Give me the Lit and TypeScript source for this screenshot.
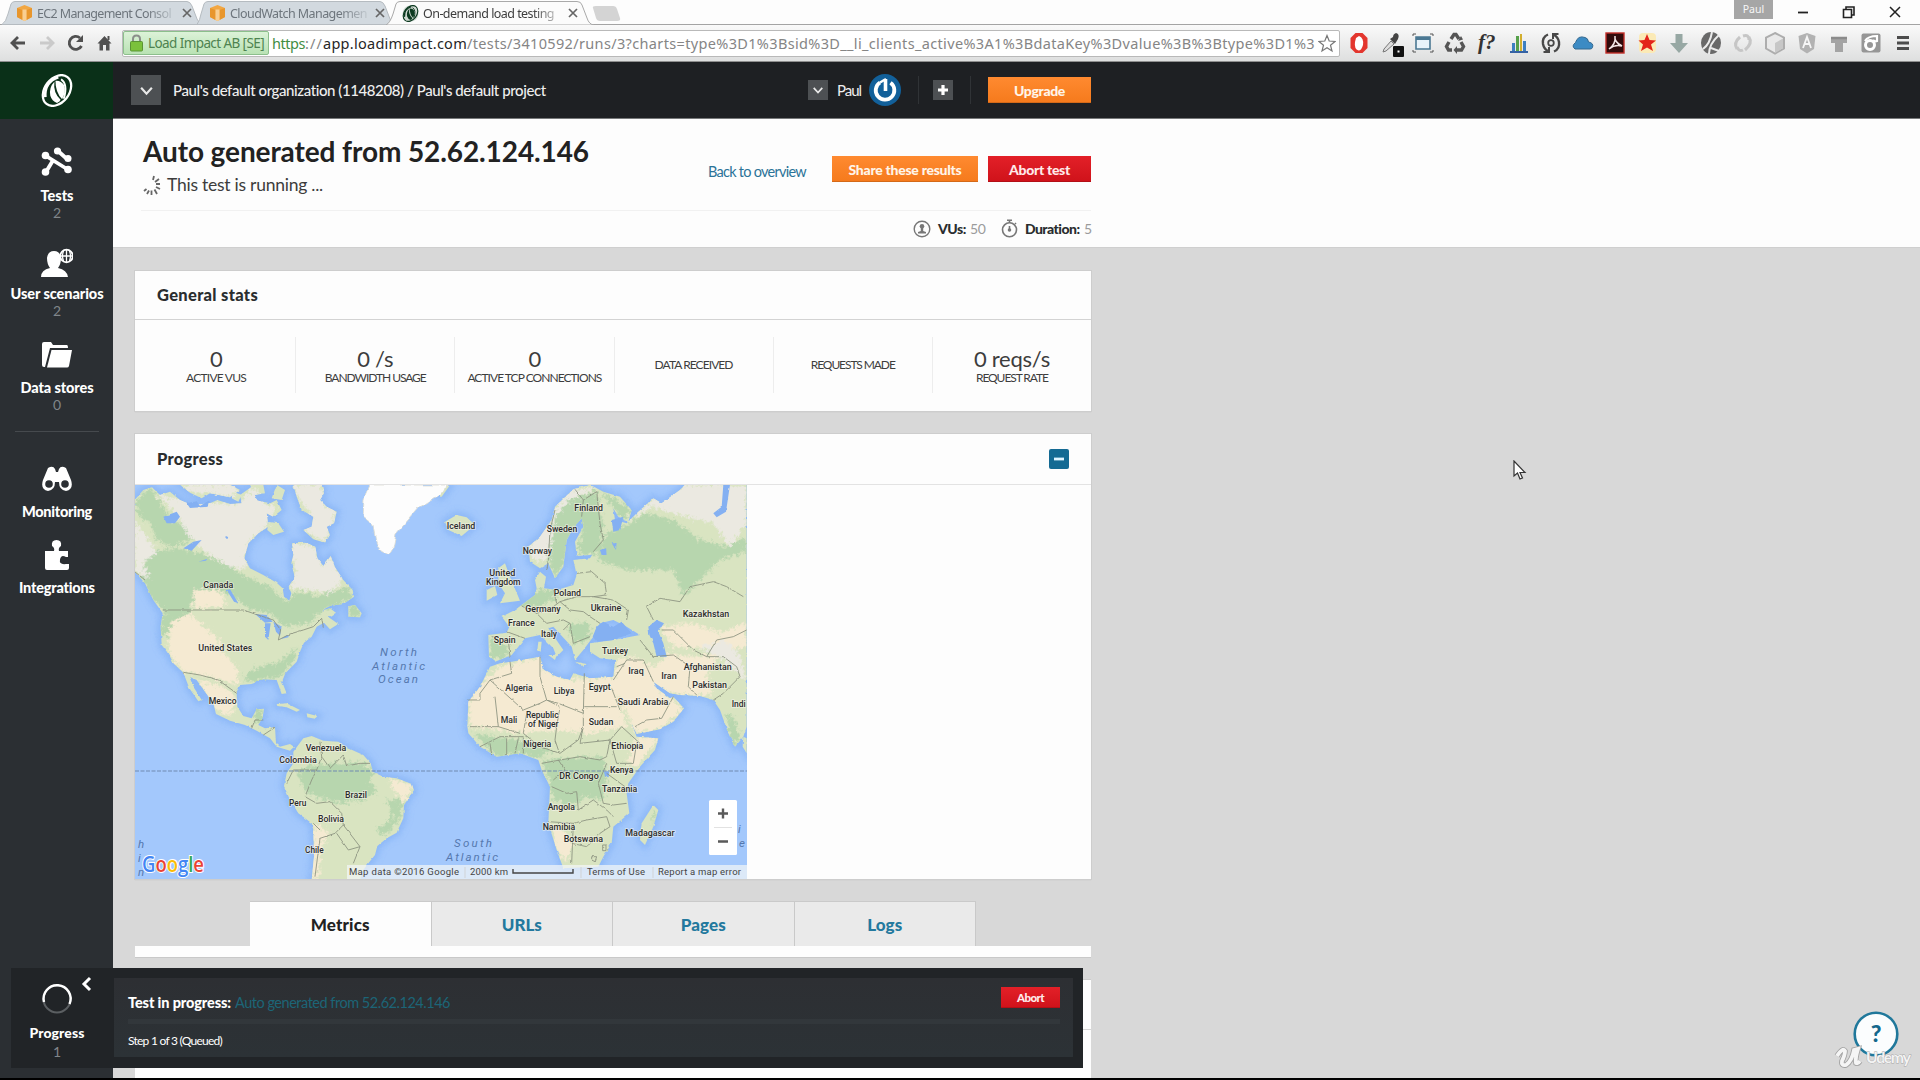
import { LitElement, html, svg, css, type TemplateResult } from "lit";
import { customElement, property } from "lit/decorators.js";

/** Single line of text whose tracking is adjusted so that it fills a given width. */
@customElement("fit-text")
class FitText extends LitElement {
  @property() text = "";
  @property({ type: Number }) w = 0;
  static styles = css`
    :host { display: inline-block; white-space: pre; text-align: left; }
  `;
  render() {
    return html`<span>${this.text}</span>`;
  }
  updated() {
    const span = this.renderRoot.querySelector("span")!;
    span.style.letterSpacing = "0px";
    const gap = (this.w - span.getBoundingClientRect().width) / this.text.length;
    span.style.letterSpacing = `${gap.toFixed(3)}px`;
    this.style.width = `${this.w}px`;
  }
}

const fit = (text: string, w: number, cls = "") =>
  html`<fit-text class=${cls} .text=${text} .w=${w}></fit-text>`;

/* ---------------------------------------------------------------- browser */

const cube = svg`<path d="M1 4 8.500 1 16 4V13L8.500 17 1 13Z" fill="#f2a743"/><path d="M1 4 6.500 6V16L1 13ZM16 4 10.500 6V16L16 13Z" fill="#e8962c"/><path d="M6.500 5.500H10.500V16.300L8.500 17 6.500 16.300Z" fill="#f9cf92"/>`;
const swirl = svg`
  <g transform="rotate(38 16 16)" fill="none" stroke="currentColor">
    <ellipse cx="16" cy="16" rx="11.800" ry="16.500" stroke-width="2.200"/>
    <path d="M9 5Q1 17 11 28" stroke-width="2.600"/>
  </g>
  <path d="M13.500 7.500Q8 13 9.500 21Q11 26 16 28Q19 27 19.500 25Q12 18 13.500 7.500Z" fill="currentColor"/>
  <path d="M14.500 6.500Q20 6 23 11Q25 17 21 24.500Q14.500 18 14.500 6.500Z" fill="currentColor"/>
  <path d="M20 5Q27 10 22.500 24" fill="none" stroke="currentColor" stroke-width="1.800"/>`;

@customElement("browser-bar")
class BrowserBar extends LitElement {
  static styles = css`
    :host { display: block; font-family: "Noto Sans", "Open Sans", sans-serif; color: #444; }
    .strip { height: 24px; background: #fdfdfd; border-bottom: 1px solid #a4a4a4; display: flex; position: relative; }
    .shapes { position: absolute; left: 0; top: 0; }
    .tabs { display: flex; position: relative; padding-left: 16px; width: 620px; box-sizing: border-box; }
    .tab { width: 193px; display: flex; align-items: center; height: 26px; font-size: 12.500px; color: #6d757c; flex: none; }
    .tab.on { color: #3d3d3d; width: 190px; }
    .tab svg { flex: none; margin-right: 4px; color: #0c3a20; }
    .label { width: 141px; -webkit-mask-image: linear-gradient(90deg, #000 78%, #0002 98%); }
    .x { margin: 0 0 0 4px !important; color: #666 !important; }
    .win { margin-left: auto; display: flex; align-items: flex-start; margin-right: 17px; }
    .user { width: 39px; height: 19px; background: #a6a6a6; color: #f6f6f6; font-size: 10.500px; text-align: center; line-height: 19px; margin-right: 22px; }
    .bar { height: 36px; display: flex; align-items: center; background: linear-gradient(#fafafa, #dedfdf); border-bottom: 1px solid #8f8f8f; }
    .nav { width: 122px; flex: none; }
    .omni { width: 1218px; height: 27px; border: 1px solid #b9b9b9; background: #fff; display: flex; align-items: center; border-radius: 2px; box-sizing: border-box; flex: none; }
    .ev { width: 146px; height: 24px; box-sizing: border-box; border: 1px solid #8cbf8c; background: linear-gradient(#dcf2d8, #b9e2b4); color: #4e8350; font-size: 13.500px; display: flex; align-items: center; border-radius: 2px; margin-right: 3px; flex: none; }
    .ev svg { margin: 0 4px 0 5px; }
    .url { font-size: 14.500px; line-height: 20px; color: #858585; display: flex; width: 1046px; flex: none; overflow: hidden; }
    .url .s { color: #3f8e43; }
    .url .h { color: #262626; }
    .ext { display: flex; margin-left: 3px; }
    .ext svg { width: 32px; height: 28px; flex: none; }
  `;
  render() {
    const X = html`<svg class="x" width="10" height="10" viewBox="0 0 10 10"><path d="M1 1 9 9M9 1 1 9" stroke="currentColor" stroke-width="1.700"/></svg>`;
    const ext: TemplateResult[] = [
      svg`<path d="M12.500 4H19.500L24.500 9V19L19.500 24H12.500L7.500 19V9Z" fill="#e3362e"/><path d="M16 7Q21 9 20 16Q18.500 21.500 15.500 21.500Q11 20 12 13L13 9Z" fill="#fff"/>`,
      svg`<path d="M8 23 9 20 16 12 19 15 11 22Z" fill="#ddd" stroke="#777"/><path d="M15 10 20 15 23 10Q25 5 21 4Q18 5 18 8Z" fill="#444"/><rect x="18" y="17" width="11" height="11" rx="1" fill="#111"/><rect x="22.500" y="21.500" width="2" height="2" fill="#fff"/>`,
      svg`<path d="M9 8H23V20H9Z" fill="#e9f3fa" stroke="#4b7893" stroke-width="1.600"/><path d="M9 9.500H23" stroke="#4b7893" stroke-width="3"/><path d="M6 7V5H9M23 5H26V7M6 21V23H9M26 21V23H23" fill="none" stroke="#555"/>`,
      svg`<g fill="none" stroke="#555" stroke-width="3.400"><path d="M12 10 15 5.500H17L20 10"/><path d="M10 13 7.500 17.500 9.500 21H13"/><path d="M22 13 24.500 17.500 22.500 21H17"/></g><path d="M19 12 24 10.500 22 7ZM18 17V25L14.500 21Z" fill="#555"/>`,
      svg`<text x="7" y="20" font-family="Liberation Serif, serif" font-style="italic" font-weight="700" font-size="21" fill="#333">f?</text>`,
      svg`<path d="M9 23V14H12V23M20 23V12H23V23" fill="#3c7fc0"/><path d="M13 23V7H16V23" fill="#55a04a"/><path d="M17 23V5H19V23" fill="#d2ae2e"/><path d="M7 23H25" stroke="#3562a4" stroke-width="2"/>`,
      svg`<g fill="none" stroke="#484848" stroke-width="2.400"><path d="M13 5.500Q7 8 8 15Q9 20 13 22"/><path d="M19 22.500Q25 20 24 13Q23 8 19 6"/><circle cx="16" cy="14" r="2.800" stroke-width="1.800"/></g><path d="M8.500 23H14V18M23.500 5H18V10" fill="none" stroke="#484848" stroke-width="2"/>`,
      svg`<path d="M8 20Q4 17 8.500 13.500Q11 6 18 8.500Q21 9 21.500 13Q27 14 25.500 18.500Q25 20 23 20Z" fill="#3c8bc4" stroke="#34698f"/>`,
      svg`<rect x="7" y="4" width="18" height="20" fill="#300b0b" stroke="#c22e28" stroke-width="1.400"/><path d="M10 20Q17 15 16 7Q15 13 23 17Q16 15 10 20Z" fill="none" stroke="#f4e6e6" stroke-width="1.500"/>`,
      svg`<rect x="8" y="4" width="17" height="20" rx="4" fill="#fbeab6"/><path d="M16 5 18.500 11 25 11.500 20 15.500 22 22 16 18.500 10 22 12 15.500 7.500 11.500 13.500 11Z" fill="#e3241b"/>`,
      svg`<path d="M12.500 5H19.500V14H25L16 24 7 14H12.500Z" fill="#97a8a4"/>`,
      svg`<ellipse cx="16" cy="14" rx="10" ry="11" fill="#696969"/><path d="M8 20Q15 15 17 3M14 25Q14 15 24 6M16 19 24 22" fill="none" stroke="#ececec" stroke-width="2"/>`,
      svg`<path d="M10 20Q6 14 13 8M22 8Q26 14 18 21M16 7Q22 5 22 11M16 21Q12 23 10 18" fill="none" stroke="#c6c6c6" stroke-width="3"/>`,
      svg`<path d="M16 4 25 8.500V19.500L16 24.500 7 19.500V8.500Z" fill="#e9e9e9" stroke="#adadad" stroke-width="2"/><path d="M16 14V24L24 19V9.500Z" fill="#c7c7c7"/>`,
      svg`<path d="M16 4 24.500 7 23 20 16 24.500 9 20 7.500 7Z" fill="#b2b2b2"/><path d="M12 19 16 8 20 19M13.500 15H18.500" fill="none" stroke="#f6f6f6" stroke-width="1.800"/>`,
      svg`<path d="M8 9H24V14H20V23H12V14H8Z" fill="#a4a4a4"/><path d="M8 9H24" stroke="#8b8b8b" stroke-width="2.500"/>`,
      svg`<rect x="6.500" y="4.500" width="19" height="19" rx="2" fill="#969696"/><circle cx="15" cy="16" r="4.500" fill="none" stroke="#fff" stroke-width="3"/><path d="M10 12Q13 7 22 7V12Q20 13 18 11" fill="none" stroke="#fff" stroke-width="2.200"/>`,
      svg`<path d="M10 8.500H22M10 14H22M10 19.500H22" stroke="#4c4c4c" stroke-width="3.200"/>`,
    ];
    return html`
      <div class="strip">
        <svg class="shapes" width="640" height="25" viewBox="0 0 640 25">
          <path d="M2 24.500Q6 22 8 14L11 4Q12 1.500 15 1.500H187Q190 1.500 192 6L197 19Q199 24.500 203 24.500Z" fill="#d2d9df" stroke="#b5bbc0"/>
          <path d="M197 24.500Q200 20 201 14L204 4Q205 1.500 208 1.500H380Q383 1.500 385 6L390 19Q392 24.500 396 24.500Z" fill="#d2d9df" stroke="#b5bbc0"/>
          <path d="M386 25Q390 23 393 14L396 4Q397 1.500 400 1.500H577Q581 1.500 582 5L587 18Q589 24.500 594 25Z" fill="#fbfbfb" stroke="#a9a9a9"/>
          <path d="M593 8Q592 6 596 6H613Q616 6 617 9L620 18Q621 21 617 21H600Q597 21 596 18Z" fill="#d4d4d4"/>
        </svg>
        <div class="tabs">
          <div class="tab"><svg width="17" height="18" viewBox="0 0 17 18">${cube}</svg><div class="label">${fit("EC2 Management Consol", 134)}</div>${X}</div>
          <div class="tab"><svg width="17" height="18" viewBox="0 0 17 18">${cube}</svg><div class="label">${fit("CloudWatch Managemen", 137)}</div>${X}</div>
          <div class="tab on"><svg width="17" height="17" viewBox="0 0 32 32"><circle cx="16" cy="16" r="15" fill="#cfd8d1"/>${swirl}</svg><div class="label">${fit("On-demand load testing", 131)}</div>${X}</div>
        </div>
        <div class="win">
          <div class="user">Paul</div>
          <svg width="108" height="24" viewBox="0 0 108 24" fill="none" stroke="#222">
            <path d="M3 12.500H13" stroke-width="1.800"/><path d="M48.500 9.500H56.500V17.500H48.500Z" stroke-width="1.600"/><path d="M51 9V7H59V15H57" stroke-width="1.600"/><path d="M95 7 105 17M105 7 95 17" stroke-width="1.500"/>
          </svg>
        </div>
      </div>
      <div class="bar">
        <svg class="nav" width="122" height="30" viewBox="0 0 122 30" fill="none" stroke="#505050" stroke-width="2.800">
          <path d="M12 15H25M18 9 12 15 18 21"/><path d="M40 15H52M47 9 53 15 47 21" stroke="#cacaca"/>
          <path d="M80 10A6.500 6.500 0 1 0 81.500 18"/><path d="M83 7V14H76Z" fill="#505050" stroke="none"/>
          <path d="M97.500 15.500 104.500 8 111.500 15.500H109.500V22.500H106V17H103V22.500H99.500V15.500Z" fill="#505050" stroke="none"/><path d="M108.500 8V12" stroke-width="2"/>
        </svg>
        <div class="omni">
          <div class="ev"><svg width="15" height="18" viewBox="0 0 15 18"><path d="M4 8V5Q4 1.500 7.500 1.500T11 5V8" fill="none" stroke="#8b8f8b" stroke-width="2"/><rect x="1.500" y="7.500" width="12" height="9.500" rx="1" fill="#7bc13c" stroke="#5a9434"/></svg>${fit("Load Impact AB [SE]", 116)}</div>
          <div class="url">${fit("https", 33, "s")}${fit("://", 18)}${fit("app.loadimpact.com", 144, "h")}${fit("/tests/3410592/runs/3?charts=type%3D1%3Bsid%3D__li_clients_active%3A1%3BdataKey%3Dvalue%3B%3Btype%3D1%3", 848)}</div>
          <svg width="18" height="19" viewBox="0 0 18 19"><path d="M9 1.500 11.200 7 17 7.500 12.500 11.200 14 17 9 13.800 4 17 5.500 11.200 1 7.500 6.800 7Z" fill="#fff" stroke="#777" stroke-width="1.200"/></svg>
        </div>
        <div class="ext">${ext.map((e) => html`<svg viewBox="0 0 32 28">${e}</svg>`)}</div>
      </div>`;
  }
}

/* -------------------------------------------------------------------- map */

type Label = [string, number, number, number];

/* Shapes are drawn on two sheets at three units per pixel: west and east of the mid Atlantic. */
const westLand = [
  "M14 60 40 30 66 22 90 45 120 35 150 60 185 75 240 70 262 60 300 72 335 70 330 45 365 20 380 60 410 75 440 60 455 90 430 110 410 100 415 140 385 160 355 190 343 235 360 265 400 285 440 308 458 325 462 350 478 362 484 340 476 320 494 290 484 250 490 225 486 190 525 188 556 200 562 235 580 258 602 228 615 262 640 300 668 330 672 350 640 372 600 378 572 392 600 385 618 398 596 412 625 432 600 448 582 428 560 440 545 470 522 488 512 510 500 545 466 580 456 605 470 640 455 642 440 600 400 598 365 612 330 615 320 640 322 680 340 708 365 715 380 688 402 686 398 712 385 735 405 745 435 742 438 790 450 800 480 792 492 800 480 812 440 800 420 775 380 752 345 735 300 722 258 702 250 670 225 635 200 600 178 590 190 620 215 660 205 664 178 625 160 578 130 550 118 525 95 495 92 440 98 400 70 360 45 310 14 275Z",
  "M490 815 520 775 545 768 580 782 625 785 655 805 700 825 722 850 728 875 760 890 800 895 845 912 852 930 822 975 820 1015 800 1058 770 1075 742 1098 735 1125 715 1150 700 1170 690 1200 545 1200 552 1130 550 1050 545 1030 505 1000 480 960 462 918 470 880 490 850Z",
  "M150 14 300 14 330 30 300 52 240 40 215 55 180 38Z", "M310 35 335 45 325 65 305 55Z",
  "M360 14 400 14 405 40 375 45ZM440 14 465 30 455 60 425 55ZM385 62 420 70 412 100 398 88Z",
  "M490 14 575 14 582 40 570 60 590 80 620 95 612 130 590 140 600 165 585 188 550 178 520 150 545 140 550 110 515 90 500 50Z",
  "M415 125 445 130 462 155 430 165 412 150Z", "M655 378 675 375 695 400 690 412 655 410Z",
  "M440 672 470 670 510 690 500 695 470 682 442 678ZM530 700 562 708 555 716 532 712Z",
];
const westGreen = [
  "M14 70 60 22 95 70 120 120 190 145 215 170 160 190 120 200 80 180 60 130 30 110Z",
  "M60 215 150 205 230 225 300 262 350 290 420 320 470 365 500 335 540 340 560 350 650 320 672 350 620 378 570 395 540 430 470 440 420 400 350 385 300 340 240 325 190 340 180 395 160 430 110 400 60 350 30 290Z",
  "M95 400 160 400 190 430 165 450 130 420 110 470 92 470Z", "M360 570 450 545 500 500 490 545 450 590 380 605 340 600Z",
  "M500 880 530 860 600 850 700 850 730 870 720 900 740 940 700 960 620 970 530 940Z M770 960 820 960 810 1020 760 1070 740 1050 790 1010Z",
  "M380 690 400 690 398 712 385 735 370 720ZM655 378 675 375 695 400 690 412 655 410Z",
];
const westSand = [
  "M120 430 180 400 210 430 260 470 280 520 320 560 325 615 270 600 200 580 160 575 115 520Z",
  "M780 895 848 915 825 970 790 930ZM552 1030 600 1060 570 1110 565 1200 545 1200Z", "M190 330 270 330 290 380 190 385Z",
  "M200 600 280 620 320 660 300 710 260 690Z",
];
const westTundra = [
  "M80 40 150 60 240 72 330 70 370 20 410 75 440 80 410 140 355 190 343 235 350 268 300 262 230 220 170 160 150 120Z",
  "M486 190 556 200 580 258 602 228 640 300 600 340 540 330 480 320 494 290Z", "M14 120 50 170 80 220 40 250 60 300 14 270Z",
  "M150 14 300 14 330 30 300 52 240 40 180 38ZM490 14 575 14 590 80 620 95 585 188 520 150 550 110 500 50Z",
];
const westLakes = [
  "M100 110 140 95 150 110 135 130 110 130ZM160 205 190 185 215 180 185 212ZM375 402 410 405 428 425 405 428ZM405 430 422 430 415 480 405 470ZM430 425 455 440 450 468 438 455ZM450 478 478 462 475 472ZM285 170 292 168 290 178ZM170 70 200 64 210 78 240 60 236 80 180 84ZM290 330 300 328 325 370 312 365ZM205 245 232 236 228 242Z",
];
const westBorders = [
  "M98 390H340L375 402 430 420 452 450 445 480 480 462 520 450 550 440 575 415 580 440", "M160 577 210 585 265 600 320 640",
  "M365 745 375 720 400 720M400 765 435 742M570 785 575 830 560 870 525 870 490 870 470 910M575 830 600 865 640 825 650 858 690 850 720 850M560 870 545 900 525 950 560 970 600 965 635 1000 640 1035 615 1060 570 1075 555 1190M640 1035 690 1100 655 1110 620 1060M690 1100 670 1150M550 1030 570 1050M14 275 45 300",
];
const eastLand = [
  "M145 465 200 458 208 440 185 410 225 390 245 375 285 345 290 325 285 300 300 275 318 290 312 325 350 330 400 315 410 285 400 240 450 235 460 220 490 215 450 225 410 228 405 185 430 140 425 115 402 140 380 180 370 260 345 295 325 250 300 265 270 245 265 200 300 170 335 120 345 80 400 28 450 14 490 35 540 50 575 90 565 125 535 110 520 85 525 120 560 130 595 95 640 55 665 70 720 30 735 14 920 14 920 740 910 770 885 800 865 760 840 690 820 660 780 648 720 645 690 640 640 605 650 625 690 655 700 650 732 685 700 725 660 748 590 762 560 700 520 625 530 610 555 680 590 770 655 775 645 810 600 860 565 910 560 940 568 1000 520 1040 515 1090 490 1130 475 1160 370 1165 350 1110 325 1030 330 920 305 870 295 840 240 820 170 830 120 800 85 760 82 740 85 665 120 620 150 560 180 550 215 545 300 530 312 570 350 590 390 600 400 580 450 595 520 590 525 540 480 535 450 515 450 490 520 480 600 465 560 440 520 420 480 430 460 470 445 490 430 510 405 540 395 500 340 440 325 445 370 510 350 530 340 505 300 465 255 475 235 500 215 525 165 545 147 530Z",
  "M175 265 195 250 210 290 235 350 240 362 180 370 195 340 175 310ZM140 330 165 318 172 345 140 362Z",
  "M15 125 50 105 80 112 105 135 65 168 25 150Z", "M640 975 655 990 640 1040 615 1095 600 1080 605 1030Z",
  "M295 485 305 485 302 515 292 510ZM325 525 350 525 345 540ZM910 770 920 775 920 820 908 800ZM405 545 440 552 430 560Z", "M0 14 28 18 5 50 0 50Z",
];
const eastGreen = [
  "M345 110 390 60 470 30 490 130 480 220 410 228 430 140 402 140 370 260 345 295 325 240Z",
  "M480 30 570 85 560 120 530 100 520 80 500 60Z", "M500 160 570 130 620 100 700 120 780 180 860 200 920 170 920 215 840 240 790 290 730 350 700 270 560 270 470 240Z",
  "M305 840 370 835 490 830 500 880 490 960 430 950 400 980 340 960 325 900Z", "M100 760 240 780 340 810 300 835 240 820 170 830Z",
  "M860 700 885 720 900 770 885 800 865 760ZM270 330 340 330 360 350 280 385 240 380ZM380 430 450 430 450 480 400 490ZM150 470 210 500 190 540 150 530ZM640 990 650 1000 635 1040Z",
];
const eastSand = [
  "M85 665 120 620 180 560 300 530 312 570 390 600 520 590 530 650 560 740 450 760 340 750 240 760 90 740Z",
  "M530 540 580 530 640 560 690 520 760 530 840 520 800 590 820 640 780 648 690 640 650 625 732 685 660 748 590 762 560 700 520 625Z",
  "M330 1035 360 1040 400 1090 380 1150 350 1110ZM590 770 655 775 590 860 560 850Z", "M660 440 760 430 840 460 920 430 920 500 840 510 700 500Z",
];
const eastTundra = ["M560 125 640 55 735 14 920 14 920 130 870 200 820 130 700 100 640 80Z", "M265 200 335 120 345 80 400 28 480 20 390 60 345 110 325 240 275 240Z", "M780 500 860 480 900 530 920 600 850 540Z"];
const eastWater = [
  "M470 440 490 425 520 440 545 425 575 460 520 480 470 485 458 470Z", "M625 440 650 420 672 430 655 455 670 490 680 530 650 530 640 490 628 465Z",
  "M820 100 845 80 850 14 870 14 858 95 830 112ZM480 210 498 205 500 225 485 225ZM515 190 530 190 528 210ZM492 875 508 872 506 892 495 890ZM515 120 550 110 540 150 520 155Z",
];
const eastBorders = [
  "M405 28 430 60 470 35 480 130 490 180 460 215M345 90 330 150 325 240M430 60 425 110M325 245 320 270",
  "M620 380 660 355 720 365 750 320 820 305 860 320 910 350M620 380 640 420M665 450 700 450 760 510 800 530 830 480 880 470 920 450",
  "M245 378 290 400 340 380 360 365 410 350 460 350 500 345 495 310 455 275 410 280M460 350 520 360 565 390 560 420M290 400 320 430 370 420 390 430 370 450M360 365 390 390 430 395 450 410 480 430M340 330 350 370M390 430 400 490 450 470M210 530 205 480 155 470M200 455 255 475M520 600 560 540 610 540 640 605M530 560 555 550M600 480 640 530 700 525 750 560 745 620 770 645M800 530 850 530 890 560 900 590 850 640 820 660M585 740 620 720 665 715 700 650",
  "M85 660H120V640L150 600 215 580 210 545M150 600 250 690 300 670 320 660 300 590 300 530M165 650 175 740 90 740M320 660 355 670 430 700 433 580M320 660 360 680 350 740 345 780 355 810M430 700V740L415 780 360 820 300 800 250 760 260 700M515 625 540 690M433 680H530M430 740 420 790 510 780 500 830 480 840 420 830 360 840 305 850M510 780 545 740 600 790M510 780 530 850 580 850 590 790M175 740 240 760M120 800 180 770 250 770M155 825 150 790M200 825V775M225 820 235 775M250 770 250 820",
  "M335 920 380 940 410 935 415 990 460 960M325 1025 400 1030 440 1020 500 1010 510 1040M400 1030 395 1150M395 1090 440 1100 480 1060 510 1040M490 970 475 910 500 850M490 970 520 975 560 970M460 960 500 990 520 1010M500 880 555 920M355 840 375 870 340 900M455 1130 470 1130 465 1145 455 1140ZM488 1095H498V1112H488Z",
];
const westNames: Label[] = [
  ["Canada", 220, 324, 90], ["United States", 205, 514, 162], ["Mexico", 236, 671, 84], ["Venezuela", 527, 812, 122], ["Colombia", 448, 849, 112],
  ["Brazil", 645, 953, 66], ["Peru", 477, 977, 52], ["Bolivia", 564, 1026, 78], ["Chile", 525, 1118, 56],
];
const eastNames: Label[] = [
  ["Iceland", 20, 147, 86], ["Finland", 403, 93, 86], ["Sweden", 320, 156, 92], ["Norway", 248, 222, 88], ["United", 148, 288, 78], ["Kingdom", 138, 315, 104],
  ["Poland", 341, 347, 82], ["Germany", 256, 396, 106], ["Ukraine", 452, 392, 92], ["Kazakhstan", 728, 411, 140], ["France", 204, 437, 80], ["Italy", 303, 472, 48],
  ["Spain", 161, 489, 66], ["Turkey", 486, 522, 78], ["Iraq", 565, 582, 46], ["Iran", 664, 597, 46], ["Afghanistan", 731, 570, 144], ["Pakistan", 757, 624, 104],
  ["Algeria", 196, 633, 82], ["Libya", 341, 641, 62], ["Egypt", 446, 630, 66], ["Saudi Arabia", 533, 675, 152], ["Indi", 875, 681, 42], ["Mali", 182, 728, 50],
  ["Republic", 258, 713, 98], ["of Niger", 264, 740, 92], ["Sudan", 446, 735, 74], ["Nigeria", 250, 801, 84], ["Ethiopia", 514, 807, 96], ["Kenya", 510, 879, 70],
  ["DR Congo", 358, 896, 118], ["Tanzania", 486, 936, 106], ["Angola", 323, 990, 82], ["Namibia", 308, 1050, 98], ["Botswana", 371, 1086, 118], ["Madagascar", 556, 1068, 148],
];

const sheet = (id: string, x: number, land: string[], green: string[], sand: string[], tundra: string[], water: string[], borders: string[]) => svg`
  <g transform="translate(${x} -5) scale(.33333)">
    <clipPath id=${id}>${land.map((d) => svg`<path d=${d}/>`)}</clipPath>
    <g filter="url(#rough)">
      <g fill="#86b3f5" stroke="#86b3f5" stroke-width="22" filter="url(#soft)" opacity=".75">${land.map((d) => svg`<path d=${d}/>`)}</g>
      <g fill="#d9e4c1">${land.map((d) => svg`<path d=${d}/>`)}</g>
      <g clip-path="url(#${id})">
        <g filter="url(#blend)">
          <g fill="#b7d6ae">${green.map((d) => svg`<path d=${d}/>`)}</g>
          <g fill="#f5ead2">${sand.map((d) => svg`<path d=${d}/>`)}</g>
          <g fill="#ebe9e1">${tundra.map((d) => svg`<path d=${d}/>`)}</g>
        </g>
      </g>
      <g fill="#84b0f2">${water.map((d) => svg`<path d=${d}/>`)}</g>
      <g fill="none" stroke="#8b9280" stroke-width="2.600">${borders.map((d) => svg`<path d=${d}/>`)}</g>
    </g>
  </g>`;

const names = (x: number, list: Label[]) => svg`
  <g transform="translate(${x} -5) scale(.33333)">${list.map(
    ([t, lx, ly, w]) => svg`<text class="name" x=${lx} y=${ly} textLength=${w} lengthAdjust="spacingAndGlyphs">${t}</text>`
  )}</g>`;

@customElement("world-map")
class WorldMap extends LitElement {
  static styles = css`
    :host { display: block; width: 612px; height: 394px; }
    svg { display: block; }
    .name { font: 500 25px Roboto, sans-serif; fill: #2c2c2c; stroke: #f6f4ea; stroke-width: 5px; stroke-opacity: 0.65; paint-order: stroke; }
    .sea { font: italic 11.500px Roboto, sans-serif; fill: #5578ae; }
    .legal { font: 9.500px Roboto, sans-serif; fill: #444; }
    .google { font: 600 21px "Open Sans", sans-serif; stroke: #fff; stroke-width: 2px; paint-order: stroke; }
  `;
  render() {
    const letters: [string, string][] = [["G", "#4285f4"], ["o", "#ea4335"], ["o", "#fbbc05"], ["g", "#4285f4"], ["l", "#34a853"], ["e", "#ea4335"]];
    return html`<svg width="612" height="394" viewBox="0 0 612 394">
      <defs>
        <filter id="rough" x="-5%" y="-5%" width="110%" height="110%"><feTurbulence type="fractalNoise" baseFrequency=".06" numOctaves="3" seed="4"/><feDisplacementMap in="SourceGraphic" scale="7" xChannelSelector="R" yChannelSelector="G"/></filter>
        <filter id="soft" x="-10%" y="-10%" width="120%" height="120%"><feGaussianBlur stdDeviation="9"/></filter>
        <filter id="blend" x="-5%" y="-5%" width="110%" height="110%"><feTurbulence type="fractalNoise" baseFrequency=".09" numOctaves="3" seed="9" result="n"/><feGaussianBlur in="SourceGraphic" stdDeviation="3.500" result="b"/><feDisplacementMap in="b" in2="n" scale="34" xChannelSelector="R" yChannelSelector="G"/></filter>
      </defs>
      <rect width="612" height="394" fill="#a3c8fc"/>
      ${sheet("west", -5, westLand, westGreen, westSand, westTundra, westLakes, westBorders)}
      ${sheet("east", 305, eastLand, eastGreen, eastSand, eastTundra, eastWater, eastBorders)}
      <path d="M234 0H313L311 6 300 12 284 22 274 34 262 48 259 63 254 71 245 66 240 56 237 40 227 32 228 14Z" fill="#fdfdfd" filter="url(#rough)" stroke="#dcdcd2" stroke-width=".8"/>
      <path d="M0 286H612" stroke="#7189b0" stroke-width="1.200" stroke-dasharray="4 1.500"/>
      ${names(-5, westNames)}${names(305, eastNames)}
      <text class="sea" x="245" y="171" textLength="37">North</text><text class="sea" x="237" y="185" textLength="53">Atlantic</text><text class="sea" x="243" y="198" textLength="40">Ocean</text>
      <text class="sea" x="319" y="362" textLength="38">South</text><text class="sea" x="311" y="376" textLength="52">Atlantic</text>
      <text class="sea" x="3" y="363">h</text><text class="sea" x="3" y="377">i</text><text class="sea" x="3" y="391">n</text>
      <text class="sea" x="603" y="348">i</text><text class="sea" x="604" y="362">e</text>
      <rect x="212" y="380" width="400" height="14" fill="#f3f5f7" opacity=".72"/>
      <text class="legal" x="214" y="390" textLength="110">Map data ©2016 Google</text><text class="legal" x="335" y="390" textLength="38">2000 km</text>
      <path d="M378 384V388H438V384" fill="none" stroke="#444" stroke-width="1.400"/>
      <path d="M330 382V393M446 382V393M518 382V393" stroke="#d0d3d6"/>
      <text class="legal" x="452" y="390" textLength="58">Terms of Use</text><text class="legal" x="523" y="390" textLength="83">Report a map error</text>
      <text class="google" x="7" y="387" textLength="62" lengthAdjust="spacingAndGlyphs">${letters.map(([c, f]) => svg`<tspan fill=${f}>${c}</tspan>`)}</text>
      <rect x="574" y="315" width="28" height="55" rx="1.500" fill="#fff"/><path d="M579 342.500H597" stroke="#e2e2e2"/>
      <path d="M583 328.500H593M588 323.500V333.500M583 356.500H593" stroke="#5a5a5a" stroke-width="2.400"/>
    </svg>`;
  }
}

/* -------------------------------------------------------------------- app */

interface NavItem { label: string; w: number; count?: string; icon: TemplateResult; cls: string; }

const navItems: NavItem[] = [
  { label: "Tests", w: 33, count: "2", cls: "a", icon: svg`<g stroke="#fff" stroke-width="3.800" stroke-linecap="round"><path d="M5 9 26 22M17 4 26 12M11 15 5 25" /></g><g fill="#fff"><circle cx="4.500" cy="8.500" r="3.800"/><circle cx="27" cy="22.500" r="3.800"/><circle cx="16.500" cy="4" r="3.600"/><circle cx="27" cy="11.500" r="3.500"/><circle cx="4.500" cy="25" r="3.800"/></g>` },
  { label: "User scenarios", w: 93, count: "2", cls: "b", icon: svg`<path d="M0 29Q0 22 9 20Q6 16 6 10Q7 3 13 3T20 10Q20 16 17 20Q26 22 27 29Z" fill="#fff"/><circle cx="25.500" cy="8" r="6.300" fill="#2b2f33" stroke="#fff" stroke-width="1.800"/><path d="M19 8H32M25.500 2V14M22.500 3Q20.500 8 22.500 13M28.500 3Q30.500 8 28.500 13" stroke="#fff" stroke-width="1.300" fill="none"/>` },
  { label: "Data stores", w: 73, count: "0", cls: "c", icon: svg`<path d="M1 3Q1 1 3 1H10L12 4H26Q27 4 27 7H9L4 26H3Q1 26 1 24Z" fill="#fff"/><path d="M10.500 9H31L28 25Q27.500 26.500 26 26.500H6Z" fill="#fff"/>` },
  { label: "Monitoring", w: 70, cls: "d", icon: svg`<path d="M7 4Q12 1 14 5L15 8H17L18 5Q20 1 25 4L30 16Q33 25 25 27Q18 26 18 18H14Q14 26 7 27Q-1 25 2 16Z" fill="#fff"/><circle cx="8" cy="20" r="3.800" fill="#2b2f33"/><circle cx="24" cy="20" r="3.800" fill="#2b2f33"/>` },
  { label: "Integrations", w: 76, cls: "e", icon: svg`<path d="M4 11H13Q14 8 11 6Q10 0 15.500 0T20 6Q17 8 18 11H27V17H25Q20 14 19 19.500T25 24H28V28Q28 30 26 30H6Q4 30 4 28Z" fill="#fff"/>` },
];

const stats: [string, number, string, number][] = [
  ["0", 12, "ACTIVE VUS", 60], ["0 /s", 36, "BANDWIDTH USAGE", 101], ["0", 12, "ACTIVE TCP CONNECTIONS", 134],
  ["", 0, "DATA RECEIVED", 78], ["", 0, "REQUESTS MADE", 84], ["0 reqs/s", 76, "REQUEST RATE", 72],
];

@customElement("app-root")
class AppRoot extends LitElement {
  static styles = css`
    :host { display: block; width: 1920px; height: 1080px; position: relative; overflow: hidden; background: #d8d8d8; font-family: Lato, "Open Sans", sans-serif; color: #2a2d2f; }
    .top { height: 56px; display: flex; align-items: center; background: #1e2023; border-bottom: 1px solid #77797a; color: #eee; }
    .logo { width: 113px; height: 57px; background: #0a3018; display: grid; place-items: center; color: #fff; margin-right: 18px; }
    .drop { display: grid; place-items: center; background: #4d5053; width: 30px; height: 30px; margin-right: 12px; }
    .drop.sm { width: 20px; height: 20px; margin-right: 9px; }
    .drop.add { margin: 0 17px 0 14px; }
    .org { font-size: 15px; font-weight: 500; width: 635px; flex: none; }
    .me { font-size: 15px; margin-right: 8px; }
    .avatar { margin-right: 17px; }
    .rule { width: 1px; height: 28px; background: #303336; }
    .btn { display: grid; place-items: center; height: 26px; font-weight: 900; font-size: 14px; color: #fff4e8; background: linear-gradient(#ff8a30, #f57a1c); box-shadow: inset 0 -1px #0002; }
    .btn.red { background: linear-gradient(#e32028, #cf121a); color: #ffeaea; }
    .btn.up { width: 103px; margin-left: 17px; }
    .btn.share { width: 146px; margin-right: 10px; }
    .btn.abort { width: 103px; }
    .body { display: flex; height: 959px; }
    .side { width: 113px; background: #2b2f33; color: #fff; display: flex; flex-direction: column; align-items: center; padding: 28px 0 0 1px; box-sizing: border-box; flex: none; }
    .item { display: flex; flex-direction: column; align-items: center; font-weight: 900; font-size: 14.500px; line-height: 18px; }
    .item svg { margin-bottom: 9px; }
    .item.b { margin-top: 27px; }
    .item.b svg { margin-bottom: 6px; }
    .item.c { margin-top: 22px; }
    .item.c svg { margin-bottom: 7px; }
    .item.d svg, .item.e svg { margin-bottom: 8px; }
    .item.e { margin-top: 19px; }
    .n { font-size: 14px; font-weight: 400; color: #81868a; line-height: 16px; }
    .split { width: 84px; height: 1px; background: #464a4e; margin: 18px 0 32px; }
    .main { flex: 1; }
    .head { height: 128px; background: #fdfdfd; border-bottom: 1px solid #cfcfcf; box-sizing: content-box; }
    .inner { width: 950px; margin-left: 28px; height: 128px; display: flex; flex-direction: column; }
    .hrow { display: flex; height: 93px; border-bottom: 1px solid #f1f1f1; }
    .titles { padding: 15px 0 0 2px; width: 565px; box-sizing: border-box; }
    .title { font-size: 28px; font-weight: 700; line-height: 34px; display: block; color: #222; }
    .run { display: flex; align-items: center; gap: 6px; font-size: 17.500px; line-height: 30px; margin-top: 2px; color: #3c3c3c; }
    .acts { display: flex; padding-top: 37px; }
    .back { color: #2b7398; font-size: 14.500px; line-height: 32px; margin: 0 26px 0 2px; }
    .meta { display: flex; align-items: center; justify-content: flex-end; height: 37px; font-size: 14px; margin-right: -1px; }
    .meta b { display: inline-block; margin: 0 4px 0 7px; font-weight: 900; }
    .meta .q { color: #9b9b9b; }
    .clock { margin-left: 15px; }
    .cards { margin-left: 22px; width: 956px; padding-top: 23px; }
    .card { background: #fdfdfd; box-shadow: 0 0 0 1px #cdcdcd, 0 1px 1px #bcbcbc; }
    .ct { height: 48px; display: flex; align-items: center; justify-content: space-between; padding: 0 22px; font-weight: 900; font-size: 16.500px; border-bottom: 1px solid #d3d3d3; }
    .ct.p { height: 50px; border-color: #e3e3e3; }
    .ct.p > * { margin-bottom: 1px; }
    .stats { display: flex; height: 91px; padding: 17px 0 0 2px; box-sizing: border-box; }
    .stat { flex: 1; height: 56px; display: flex; flex-direction: column; align-items: center; justify-content: center; border-right: 1px solid #ededed; color: #3d3d3d; }
    .stat:last-child { border: 0; }
    .val { font-size: 22px; line-height: 22px; margin-top: 3px; }
    .lab { font-size: 12px; line-height: 15px; }
    .lab:only-child { margin-bottom: 2px; }
    .minus { background: #146a93; width: 20px; height: 20px; border-radius: 2px; display: grid; place-items: center; }
    .gap { height: 23px; }
    .tabs { display: flex; padding-left: 115px; height: 45px; margin-top: 22px; }
    .tab { width: 181.500px; box-sizing: border-box; border-right: 1px solid #c9c9c9; border-top: 1px solid #cacaca; background: #eaeaea; color: #23799e; font-weight: 900; font-size: 17px; display: grid; place-items: center; }
    .tab.on { background: #fdfdfd; color: #222; }
    .slab { height: 11px; background: #fdfdfd; border-bottom: 1px solid #c8c8c8; }
    .next { margin-top: 21px; height: 98px; background: #fdfdfd; border-top: 1px solid #ccc; }
    .next div { height: 49px; border-bottom: 1px solid #d6d6d6; }
    .floor { position: absolute; left: 0; right: 0; top: 1078px; height: 2px; background: #000; }
    .panel { position: absolute; left: 11px; top: 968px; width: 1072px; height: 100px; background: #212427; display: flex; color: #fff; }
    .pl { width: 92px; display: flex; flex-direction: column; align-items: center; font-weight: 900; font-size: 14px; padding-top: 14px; box-sizing: border-box; line-height: 18px; }
    .pl svg { margin: 0 0 8px 0; flex: none; overflow: visible; }
    .pl .n { margin-top: 2px; }
    .pr { margin: 10px 10px 11px 11px; width: 959px; background: linear-gradient(#2d2f33, #2c3236); padding: 9px 13px 0 14px; box-sizing: border-box; }
    .prow { display: flex; align-items: flex-start; height: 32px; border-bottom: 5px solid #32373b; font-size: 14.500px; font-weight: 900; }
    .prow fit-text { line-height: 32px; }
    .link { color: #1c6577; font-weight: 400; margin-left: 4px; }
    .prow .btn { margin-left: auto; width: 59px; height: 21px; font-size: 11.500px; }
    .prow .btn fit-text { line-height: 20px; }
    .step { font-size: 12px; line-height: 34px; display: block; }
    .help { position: absolute; left: 1853px; top: 1011px; }
    .mark { position: absolute; left: 1833px; top: 1043px; }
    .mark text { font: 700 16px Lato, sans-serif; fill: #f3f3f3; stroke: #a5a5a5; stroke-width: 0.800px; paint-order: stroke; }
    .cursor { position: absolute; left: 1513px; top: 460px; }
  `;
  render() {
    const chev = (s: number) => html`<svg width=${s} height=${s} viewBox="0 0 14 14"><path d="M2 4.500 7 10 12 4.500" fill="none" stroke="#e8e8e8" stroke-width="2"/></svg>`;
    const nav = (i: NavItem) => html`<div class="item ${i.cls}">
      <svg width="32" height="31" viewBox="0 0 32 31">${i.icon}</svg>${fit(i.label, i.w)}${i.count ? html`<span class="n">${i.count}</span>` : ""}</div>`;
    return html`
      <browser-bar></browser-bar>
      <div class="top">
        <div class="logo"><svg width="34" height="33" viewBox="0 0 32 32">${swirl}</svg></div>
        <div class="drop">${chev(15)}</div>
        <div class="org">${fit("Paul's default organization (1148208) / Paul's default project", 373)}</div>
        <div class="drop sm">${chev(12)}</div><div class="me">${fit("Paul", 24)}</div>
        <svg class="avatar" width="32" height="32" viewBox="0 0 32 32"><circle cx="16" cy="16" r="16" fill="#12609a"/><path d="M11 8.500A9.300 9.300 0 1 0 21.500 8.800" fill="none" stroke="#fff" stroke-width="3.800"/><path d="M16.500 5V17" stroke="#fff" stroke-width="3.600"/><path d="M11 8.500 17 5" stroke="#fff" stroke-width="2.500"/></svg>
        <div class="rule"></div>
        <div class="drop sm add"><svg width="12" height="12" viewBox="0 0 12 12"><path d="M6 1V11M1 6H11" stroke="#fff" stroke-width="3.200"/></svg></div>
        <div class="rule"></div>
        <div class="btn up">${fit("Upgrade", 51)}</div>
      </div>
      <div class="body">
        <div class="side">
          ${navItems.slice(0, 3).map(nav)}<div class="split"></div>${navItems.slice(3).map(nav)}
        </div>
        <div class="main">
          <div class="head"><div class="inner">
            <div class="hrow">
              <div class="titles">
                ${fit("Auto generated from 52.62.124.146", 446, "title")}
                <div class="run"><svg width="18" height="22" viewBox="0 0 18 22" stroke="#666" stroke-width="1.800" fill="none"><path d="M11 2 10 6M16 5 12 8M17 10H13M17 15 13 13M14 20 11.500 15.500M8.500 21V16.500M4 20 6 16.500M1 17 3.500 15" /></svg>${fit("This test is running ...", 156)}</div>
              </div>
              <div class="acts">
                ${fit("Back to overview", 98, "back")}
                <div class="btn share">${fit("Share these results", 113)}</div>
                <div class="btn red abort">${fit("Abort test", 61)}</div>
              </div>
            </div>
            <div class="meta">
              <svg width="18" height="18" viewBox="0 0 18 18"><circle cx="9" cy="9" r="7.800" fill="none" stroke="#777" stroke-width="1.400"/><circle cx="9" cy="6.300" r="2.300" fill="#777"/><path d="M7.800 8H10.200V11L13 12V13.500H5V12L7.800 11Z" fill="#777"/></svg>
              <b>${fit("VUs:", 28)}</b><span class="q">${fit("50", 16)}</span>
              <svg class="clock" width="17" height="19" viewBox="0 0 17 19" fill="none" stroke="#777" stroke-width="1.600"><circle cx="8.500" cy="10.800" r="7"/><path d="M6 1.200H11M8.500 1V4M8.500 7V11M14 4 15 5"/><circle cx="8.500" cy="11" r="1" fill="#777"/></svg>
              <b>${fit("Duration:", 55)}</b><span class="q">5</span>
            </div>
          </div></div>
          <div class="cards">
            <div class="card">
              <div class="ct">${fit("General stats", 101)}</div>
              <div class="stats">${stats.map(([v, vw, l, lw]) => html`<div class="stat">${v ? fit(v, vw, "val") : ""}${fit(l, lw, "lab")}</div>`)}</div>
            </div>
            <div class="gap"></div>
            <div class="card">
              <div class="ct p">${fit("Progress", 66)}<div class="minus"><svg width="12" height="4"><path d="M1 2H11" stroke="#dff4ff" stroke-width="2.800"/></svg></div></div>
              <world-map></world-map>
            </div>
            <div class="tabs"><div class="tab on">${fit("Metrics", 59)}</div><div class="tab">${fit("URLs", 40)}</div><div class="tab">${fit("Pages", 45)}</div><div class="tab">${fit("Logs", 35)}</div></div>
            <div class="slab"></div>
            <div class="next"><div></div></div>
          </div>
        </div>
      </div>
      <div class="panel">
        <div class="pl">
          <svg width="70" height="34" viewBox="0 0 70 34" fill="none"><circle cx="35" cy="17" r="13.500" stroke="#5b5f62" stroke-width="2"/><path d="M22 20A13.500 13.500 0 1 1 47.500 22" stroke="#fff" stroke-width="2.400"/><path d="M68 -4 62 2 68 8" stroke="#fff" stroke-width="3"/></svg>
          ${fit("Progress", 55)}<span class="n">1</span>
        </div>
        <div class="pr">
          <div class="prow">${fit("Test in progress:", 103)}${fit("Auto generated from 52.62.124.146", 215, "link")}<div class="btn red">${fit("Abort", 27)}</div></div>
          ${fit("Step 1 of 3 (Queued)", 94, "step")}
        </div>
      </div>
      <svg class="help" width="46" height="46" viewBox="0 0 46 46"><circle cx="23" cy="23" r="21.300" fill="#fbfdfe" stroke="#20789b" stroke-width="2.600"/><text x="23" y="31" text-anchor="middle" font-family="Lato, sans-serif" font-weight="900" font-size="23" fill="#14688d">?</text></svg>
      <svg class="mark" width="84" height="30" viewBox="0 0 84 30"><path d="M4 13Q10 4 12 8Q12 12 9 18Q8 23 13 22Q19 18 21 7L25 6Q22 16 23 20Q25 21 27 18" fill="none" stroke="#a2a2a2" stroke-width="5.500"/><path d="M4 13Q10 4 12 8Q12 12 9 18Q8 23 13 22Q19 18 21 7L25 6Q22 16 23 20Q25 21 27 18" fill="none" stroke="#f5f5f5" stroke-width="3.800"/><text x="33" y="20" textLength="45">Udemy</text></svg>
      <svg class="cursor" width="14" height="21" viewBox="0 0 14 21"><path d="M1 1V16L4.500 13 7 19 9.500 18 7 12.500H12Z" fill="#fff" stroke="#333" stroke-width="1.200"/></svg>
      <div class="floor"></div>`;
  }
}
